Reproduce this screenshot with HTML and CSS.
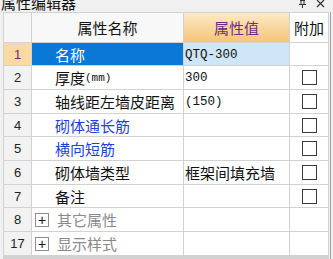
FILE: index.html
```html
<!DOCTYPE html>
<html>
<head>
<meta charset="utf-8">
<link rel="stylesheet" href="styles.css">
</head>
<body>
<div class="panel">
  <div class="titlebar">
    <span class="title">属性编辑器</span>
    <span class="tools">
      <svg class="pin" width="9" height="8" viewBox="0 0 9 8"><path d="M2 0.5H7M3 0.5V4M6 0.5V4M1 4.5H8M4.5 4.5V8" stroke="#333" stroke-width="1" fill="none"/></svg>
      <svg class="close" width="9" height="8" viewBox="0 0 9 8"><path d="M1 0L8 7M8 0L1 7" stroke="#333" stroke-width="1.2" fill="none"/></svg>
    </span>
  </div>
  <div class="body">
    <div class="grid">
      <div class="c hnum"></div>
      <div class="c hname">属性名称</div>
      <div class="c hval">属性值</div>
      <div class="c hadd">附加</div>

      <div class="c num sel">1</div>
      <div class="c name active">名称</div>
      <div class="c val active"><span class="a">QTQ-300</span></div>
      <div class="c add"></div>

      <div class="c num">2</div>
      <div class="c name">厚度<span class="a sm">(mm)</span></div>
      <div class="c val"><span class="a">300</span></div>
      <div class="c add"><span class="cb"></span></div>

      <div class="c num">3</div>
      <div class="c name">轴线距左墙皮距离</div>
      <div class="c val"><span class="a">(150)</span></div>
      <div class="c add"><span class="cb"></span></div>

      <div class="c num">4</div>
      <div class="c name blue">砌体通长筋</div>
      <div class="c val"></div>
      <div class="c add"><span class="cb"></span></div>

      <div class="c num">5</div>
      <div class="c name blue">横向短筋</div>
      <div class="c val"></div>
      <div class="c add"><span class="cb"></span></div>

      <div class="c num">6</div>
      <div class="c name">砌体墙类型</div>
      <div class="c val">框架间填充墙</div>
      <div class="c add"><span class="cb"></span></div>

      <div class="c num">7</div>
      <div class="c name">备注</div>
      <div class="c val"></div>
      <div class="c add"><span class="cb"></span></div>

      <div class="c num">8</div>
      <div class="c name group"><span class="plus">+</span>其它属性</div>
      <div class="c val"></div>
      <div class="c add"></div>

      <div class="c num">17</div>
      <div class="c name group"><span class="plus">+</span>显示样式</div>
      <div class="c val"></div>
      <div class="c add"></div>
    </div>
    <div class="edge"></div>
  </div>
</div>
</body>
</html>
```

FILE: styles.css
```css
html, body {
  margin: 0;
  padding: 0;
  background: #f0f0f0;
}
body {
  width: 333px;
  height: 259px;
  overflow: hidden;
  font-family: "Noto Sans CJK SC", "Noto Sans", sans-serif;
  font-size: 15px;
  color: #111;
}
.panel {
  width: 333px;
  height: 259px;
  display: flex;
  flex-direction: column;
}
.titlebar {
  height: 12px;
  flex: none;
  display: flex;
  justify-content: space-between;
  align-items: flex-start;
  overflow: hidden;
  background: #f0f0f0;
}
.title {
  padding-left: 1px;
  line-height: 6px;
  font-size: 15px;
  color: #111;
  white-space: nowrap;
}
.tools {
  display: flex;
  gap: 9px;
  padding-right: 8px;
  padding-top: 0;
}
.pin, .close {
  display: block;
}
.body {
  display: flex;
  padding-left: 3px;
  flex: none;
}
.grid {
  display: grid;
  grid-template-columns: 27px 151px 105px 38px;
  grid-template-rows: 29px 22px 23px 23px 22px 23px 23px 22px 23px 23px;
  gap: 1px;
  padding: 1px;
  background: #d2d2d2;
}
.c {
  background: #fff;
  display: flex;
  align-items: center;
  white-space: nowrap;
  overflow: hidden;
  line-height: 1;
}
.hnum {
  background: #f6f6f6;
}
.hname {
  background: #f8f8f8;
  justify-content: center;
  color: #111;
}
.hval {
  background: linear-gradient(#fde9c6, #f5c57a);
  justify-content: center;
  color: #6e2a86;
}
.hadd {
  background: #fff;
  justify-content: center;
  color: #111;
}
.num {
  background: #f2f2f2;
  justify-content: center;
  font-family: "Liberation Sans", sans-serif;
  font-size: 13px;
  color: #222;
}
.num.sel {
  background: #fbd9a3;
  color: #6e2a6e;
}
.name {
  padding-left: 23px;
}
.name.active {
  background: #0a78d6;
  color: #fff;
}
.val {
  padding-left: 1px;
}
.val.active {
  background: #cfe6f8;
}
.a {
  font-family: "Liberation Mono", "DejaVu Sans Mono", monospace;
  font-size: 12.5px;
  padding-top: 2px;
}
.a.sm {
  font-size: 11px;
}
.blue {
  color: #1f3fd8;
}
.group {
  padding-left: 3px;
  color: #8a8a8a;
}
.plus {
  width: 12px;
  height: 12px;
  border: 1px solid #8c8c8c;
  display: flex;
  align-items: center;
  justify-content: center;
  font-family: "Liberation Sans", sans-serif;
  font-size: 14px;
  color: #111;
  margin-right: 8px;
  background: #fff;
}
.add {
  justify-content: center;
}
.cb {
  width: 13px;
  height: 13px;
  border: 1px solid #3a3a3a;
  background: #fff;
}
.edge {
  width: 1px;
  margin-left: 1px;
  background: #a0a0a0;
  height: 259px;
}
```
